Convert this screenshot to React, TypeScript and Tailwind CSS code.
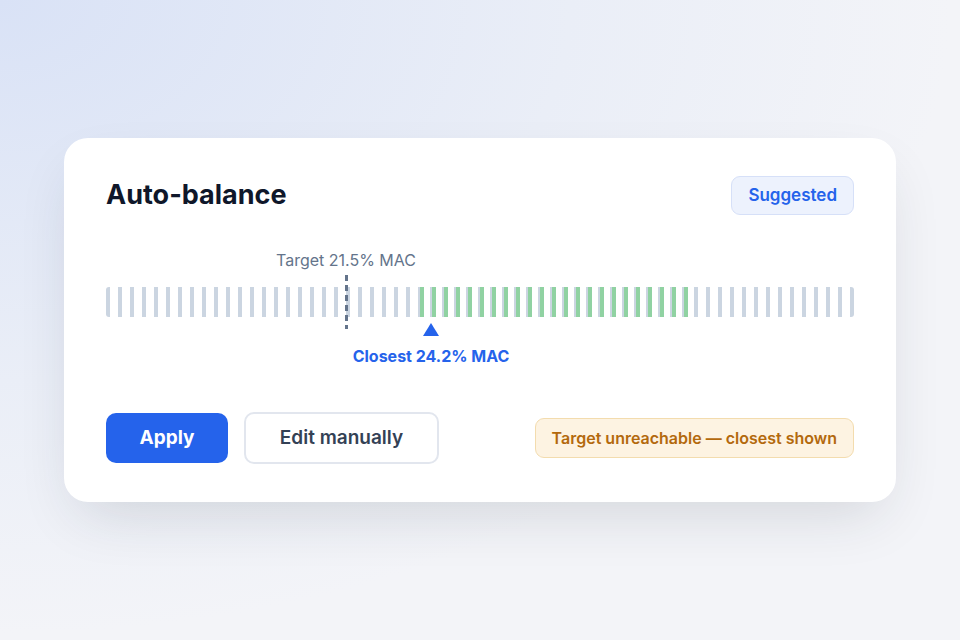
import React from 'react';

const TRACK_BARS = 63;
const GREEN_BARS = 23;

const Track: React.FC = () => {
  return (
    <div className="relative h-[30px] w-full">
      {/* base stripes */}
      <div className="flex h-full justify-between">
        {Array.from({ length: TRACK_BARS }).map((_, i) => (
          <div
            key={i}
            className={
              'h-full w-1 bg-[#cbd5e1] ' +
              (i === 0 ? 'rounded-l-[3px]' : i === TRACK_BARS - 1 ? 'rounded-r-[3px]' : '')
            }
          />
        ))}
      </div>

      {/* reachable range */}
      <div className="absolute top-0 left-[314px] flex h-full gap-2">
        {Array.from({ length: GREEN_BARS }).map((_, i) => (
          <div key={i} className="h-full w-1 bg-[#90d2a2]" />
        ))}
      </div>

      {/* target marker */}
      <div className="absolute -top-3 left-[239px] flex h-[54px] w-[3px] flex-col gap-1 overflow-hidden">
        {Array.from({ length: 6 }).map((_, i) => (
          <div key={i} className="h-[6px] w-full shrink-0 bg-[#64748b]" />
        ))}
      </div>
    </div>
  );
};

const App: React.FC = () => {
  return (
    <div
      className="flex h-[640px] w-[960px] items-center justify-center bg-[radial-gradient(ellipse_at_0%_0%,#d9e2f6_0%,#eaeef7_42%,#f3f4f8_70%)]"
      style={{ fontFamily: 'Inter, "Noto Sans", sans-serif' }}
    >
      <div className="w-[832px] rounded-[24px] bg-white px-[42px] pt-[38px] pb-[38px] shadow-[0_24px_60px_-16px_rgba(30,41,59,0.16)]">
        {/* Header */}
        <div className="flex h-[39px] items-center justify-between">
          <h1 className="text-[27px] font-bold text-[#0f172a]">Auto-balance</h1>
          <span className="flex h-[39px] items-center rounded-[9px] border border-[#d6e0f8] bg-[#edf2fd] px-[16px] text-[17px] font-semibold text-[#2563eb]">
            Suggested
          </span>
        </div>

        {/* Chart */}
        <div className="relative mt-[25px] h-[130px]">
          <div className="absolute top-[8px] left-[240px] -translate-x-1/2 whitespace-nowrap text-[16px] text-[#64748b]">
            Target 21.5% MAC
          </div>

          <div className="pt-[47px]">
            <Track />
          </div>

          <div className="absolute top-[83px] left-[325px] -translate-x-1/2">
            <svg width="18" height="14" viewBox="0 0 18 14">
              <path d="M9 0L17 13H1Z" fill="#2563eb" />
            </svg>
          </div>

          <div className="absolute top-[104px] left-[325px] -translate-x-1/2 whitespace-nowrap text-[16px] font-bold text-[#2563eb]">
            Closest 24.2% MAC
          </div>
        </div>

        {/* Footer */}
        <div className="mt-[42px] flex items-center justify-between">
          <div className="flex items-center gap-4">
            <button className="h-[50px] w-[122px] rounded-[10px] bg-[#2563eb] text-[19px] font-bold text-white">
              Apply
            </button>
            <button className="h-[52px] w-[195px] rounded-[10px] border-2 border-[#e2e6ee] bg-white text-[19px] font-semibold text-[#334155]">
              Edit manually
            </button>
          </div>
          <span className="flex h-[40px] items-center rounded-[9px] border border-[#f3dcae] bg-[#fdf3e2] px-[16px] text-[16px] font-semibold text-[#b3690d]">
            Target unreachable — closest shown
          </span>
        </div>
      </div>
    </div>
  );
};

export default App;
